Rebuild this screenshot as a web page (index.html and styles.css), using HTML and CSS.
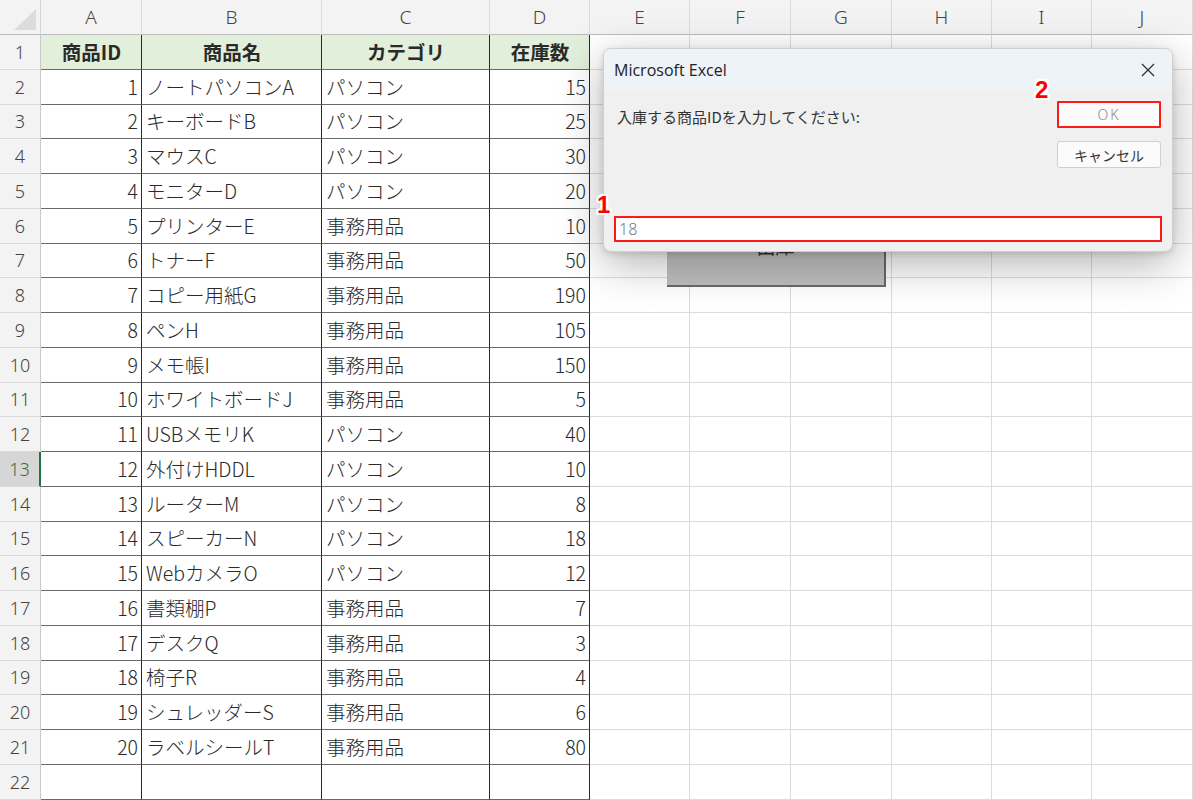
FILE: index.html
```html
<!DOCTYPE html>
<html lang="ja">
<head>
<meta charset="utf-8">
<title>Excel</title>
<link rel="stylesheet" href="styles.css">
</head>
<body>
<div class="sheet">
  <div class="corner"><svg width="41" height="35" viewBox="0 0 41 35"><polygon points="36,9 36,30 14,30" fill="#dcdcdc"/></svg></div>
  <div class="ch">A</div><div class="ch">B</div><div class="ch">C</div><div class="ch">D</div><div class="ch">E</div><div class="ch">F</div><div class="ch">G</div><div class="ch">H</div><div class="ch">I</div><div class="ch">J</div>

  <div class="rh">1</div><div class="c t hd">商品ID</div><div class="c t hd">商品名</div><div class="c t hd">カテゴリ</div><div class="c t hd">在庫数</div><div class="c"></div><div class="c"></div><div class="c"></div><div class="c"></div><div class="c"></div><div class="c"></div>
  <div class="rh">2</div><div class="c t n">1</div><div class="c t">ノートパソコンA</div><div class="c t">パソコン</div><div class="c t n">15</div><div class="c"></div><div class="c"></div><div class="c"></div><div class="c"></div><div class="c"></div><div class="c"></div>
  <div class="rh">3</div><div class="c t n">2</div><div class="c t">キーボードB</div><div class="c t">パソコン</div><div class="c t n">25</div><div class="c"></div><div class="c"></div><div class="c"></div><div class="c"></div><div class="c"></div><div class="c"></div>
  <div class="rh">4</div><div class="c t n">3</div><div class="c t">マウスC</div><div class="c t">パソコン</div><div class="c t n">30</div><div class="c"></div><div class="c"></div><div class="c"></div><div class="c"></div><div class="c"></div><div class="c"></div>
  <div class="rh">5</div><div class="c t n">4</div><div class="c t">モニターD</div><div class="c t">パソコン</div><div class="c t n">20</div><div class="c"></div><div class="c"></div><div class="c"></div><div class="c"></div><div class="c"></div><div class="c"></div>
  <div class="rh">6</div><div class="c t n">5</div><div class="c t">プリンターE</div><div class="c t">事務用品</div><div class="c t n">10</div><div class="c"></div><div class="c"></div><div class="c"></div><div class="c"></div><div class="c"></div><div class="c"></div>
  <div class="rh">7</div><div class="c t n">6</div><div class="c t">トナーF</div><div class="c t">事務用品</div><div class="c t n">50</div><div class="c"></div><div class="c"></div><div class="c"></div><div class="c"></div><div class="c"></div><div class="c"></div>
  <div class="rh">8</div><div class="c t n">7</div><div class="c t">コピー用紙G</div><div class="c t">事務用品</div><div class="c t n">190</div><div class="c"></div><div class="c"></div><div class="c"></div><div class="c"></div><div class="c"></div><div class="c"></div>
  <div class="rh">9</div><div class="c t n">8</div><div class="c t">ペンH</div><div class="c t">事務用品</div><div class="c t n">105</div><div class="c"></div><div class="c"></div><div class="c"></div><div class="c"></div><div class="c"></div><div class="c"></div>
  <div class="rh">10</div><div class="c t n">9</div><div class="c t">メモ帳I</div><div class="c t">事務用品</div><div class="c t n">150</div><div class="c"></div><div class="c"></div><div class="c"></div><div class="c"></div><div class="c"></div><div class="c"></div>
  <div class="rh">11</div><div class="c t n">10</div><div class="c t">ホワイトボードJ</div><div class="c t">事務用品</div><div class="c t n">5</div><div class="c"></div><div class="c"></div><div class="c"></div><div class="c"></div><div class="c"></div><div class="c"></div>
  <div class="rh">12</div><div class="c t n">11</div><div class="c t">USBメモリK</div><div class="c t">パソコン</div><div class="c t n">40</div><div class="c"></div><div class="c"></div><div class="c"></div><div class="c"></div><div class="c"></div><div class="c"></div>
  <div class="rh sel">13</div><div class="c t n">12</div><div class="c t">外付けHDDL</div><div class="c t">パソコン</div><div class="c t n">10</div><div class="c"></div><div class="c"></div><div class="c"></div><div class="c"></div><div class="c"></div><div class="c"></div>
  <div class="rh">14</div><div class="c t n">13</div><div class="c t">ルーターM</div><div class="c t">パソコン</div><div class="c t n">8</div><div class="c"></div><div class="c"></div><div class="c"></div><div class="c"></div><div class="c"></div><div class="c"></div>
  <div class="rh">15</div><div class="c t n">14</div><div class="c t">スピーカーN</div><div class="c t">パソコン</div><div class="c t n">18</div><div class="c"></div><div class="c"></div><div class="c"></div><div class="c"></div><div class="c"></div><div class="c"></div>
  <div class="rh">16</div><div class="c t n">15</div><div class="c t">WebカメラO</div><div class="c t">パソコン</div><div class="c t n">12</div><div class="c"></div><div class="c"></div><div class="c"></div><div class="c"></div><div class="c"></div><div class="c"></div>
  <div class="rh">17</div><div class="c t n">16</div><div class="c t">書類棚P</div><div class="c t">事務用品</div><div class="c t n">7</div><div class="c"></div><div class="c"></div><div class="c"></div><div class="c"></div><div class="c"></div><div class="c"></div>
  <div class="rh">18</div><div class="c t n">17</div><div class="c t">デスクQ</div><div class="c t">事務用品</div><div class="c t n">3</div><div class="c"></div><div class="c"></div><div class="c"></div><div class="c"></div><div class="c"></div><div class="c"></div>
  <div class="rh">19</div><div class="c t n">18</div><div class="c t">椅子R</div><div class="c t">事務用品</div><div class="c t n">4</div><div class="c"></div><div class="c"></div><div class="c"></div><div class="c"></div><div class="c"></div><div class="c"></div>
  <div class="rh">20</div><div class="c t n">19</div><div class="c t">シュレッダーS</div><div class="c t">事務用品</div><div class="c t n">6</div><div class="c"></div><div class="c"></div><div class="c"></div><div class="c"></div><div class="c"></div><div class="c"></div>
  <div class="rh">21</div><div class="c t n">20</div><div class="c t">ラベルシールT</div><div class="c t">事務用品</div><div class="c t n">80</div><div class="c"></div><div class="c"></div><div class="c"></div><div class="c"></div><div class="c"></div><div class="c"></div>
  <div class="rh">22</div><div class="c t"></div><div class="c t"></div><div class="c t"></div><div class="c t"></div><div class="c"></div><div class="c"></div><div class="c"></div><div class="c"></div><div class="c"></div><div class="c"></div>

  <div class="macro-btn"><span>出庫</span></div>

  <div class="dialog">
    <div class="dtitle">
      <span>Microsoft Excel</span>
      <svg class="close" width="14" height="14" viewBox="0 0 14 14"><path d="M1 1 L13 13 M13 1 L1 13" stroke="#333" stroke-width="1.3" fill="none"/></svg>
    </div>
    <div class="dbody">
      <div class="drow">
        <div class="msg">入庫する商品IDを入力してください:</div>
        <div class="btns">
          <div class="btn ok">OK</div>
          <div class="btn">キャンセル</div>
        </div>
      </div>
      <div class="input">18</div>
    </div>
  </div>

  <div class="badge b1">1</div>
  <div class="badge b2">2</div>
</div>
</body>
</html>
```

FILE: styles.css
```css
* { box-sizing: border-box; }
html, body { margin: 0; padding: 0; background: #fff; }
body { width: 1193px; height: 800px; overflow: hidden; }

.sheet {
  position: relative;
  display: grid;
  grid-template-columns: 41px 101px 180px 168px 100px 100px 101px 101px 100px 100px 101px;
  grid-template-rows: 35px;
  grid-auto-rows: 34.75px;
  font-family: "Noto Sans CJK JP", sans-serif;
  color: #2a2a2a;
}

.corner {
  background: #f3f3f3;
  border-right: 1px solid #d4d4d4;
  border-bottom: 1px solid #bcbcbc;
}
.corner svg { display: block; }

.ch {
  background: #f3f3f3;
  border-right: 1px solid #dadada;
  border-bottom: 1px solid #bcbcbc;
  display: flex;
  align-items: center;
  justify-content: center;
  font-family: "Noto Sans", sans-serif;
  font-size: 19px;
  font-weight: 300;
  color: #444;
}

.rh {
  background: #f3f3f3;
  border-right: 1px solid #c8c8c8;
  border-bottom: 1px solid #dadada;
  display: flex;
  align-items: center;
  justify-content: center;
  font-family: "Noto Sans", sans-serif;
  font-size: 18px;
  font-weight: 300;
  color: #444;
}
.rh.sel {
  background: #d6d6d6;
  border-right: 2px solid #217346;
  color: #3c6b4e;
}

.c {
  border-right: 1px solid #dcdcdc;
  border-bottom: 1px solid #dcdcdc;
  display: flex;
  align-items: center;
  padding: 0 3px 1px 4px;
  font-size: 19.5px;
  font-weight: 300;
  white-space: nowrap;
  overflow: hidden;
}
.c.t {
  border-right: 1px solid #2a2a2a;
  border-bottom: 1px solid #6a6a6a;
}
.c.n { justify-content: flex-end; }
.c.hd {
  background: #e2efda;
  justify-content: center;
  font-weight: 700;
}

.macro-btn {
  position: absolute;
  left: 667px;
  top: 205px;
  width: 219px;
  height: 82px;
  background: linear-gradient(#d0d0d0, #bebebe);
  border-right: 2px solid #6a6a6a;
  border-bottom: 2px solid #6a6a6a;
  display: flex;
  align-items: center;
  justify-content: center;
  font-size: 19px;
  color: #333;
}

.dialog {
  position: absolute;
  left: 603px;
  top: 48px;
  width: 570px;
  height: 204px;
  border-radius: 8px;
  background: #f0f0f0;
  border: 1px solid #cfcfcf;
  box-shadow: 0 12px 44px rgba(0, 0, 0, 0.3), 0 2px 6px rgba(0, 0, 0, 0.12);
  overflow: hidden;
  display: flex;
  flex-direction: column;
  font-family: "Noto Sans CJK JP", sans-serif;
}
.dtitle {
  height: 42px;
  flex: none;
  background: #eef3f8;
  display: flex;
  align-items: center;
  justify-content: space-between;
  padding: 0 17px 0 10px;
  font-family: "Open Sans", "Noto Sans", sans-serif;
  font-size: 16px;
  color: #222;
}
.close { display: block; }

.dbody {
  flex: 1;
  display: flex;
  flex-direction: column;
  padding: 10px 10px 9px 10px;
}
.drow {
  flex: 1;
  display: flex;
  justify-content: space-between;
}
.msg {
  margin-top: 5px;
  padding-left: 3px;
  font-size: 15px;
  color: #333;
  line-height: 22px;
}
.btns {
  display: flex;
  flex-direction: column;
  gap: 13px;
  margin-right: 1px;
}
.btn {
  width: 104px;
  height: 27px;
  background: #fbfbfb;
  border: 1px solid #cfcfcf;
  border-radius: 3px;
  display: flex;
  align-items: center;
  justify-content: center;
  font-size: 14px;
  color: #333;
}
.btn.ok {
  border: 2px solid #ff1a1a;
  border-radius: 1px;
  color: #8a8a8a;
  letter-spacing: 2px;
  font-family: "Noto Sans", sans-serif;
  font-weight: 300;
}
.input {
  height: 26px;
  background: #fff;
  border: 2px solid #ff1a1a;
  display: flex;
  align-items: center;
  padding-left: 3px;
  font-family: "Noto Sans", sans-serif;
  font-size: 16px;
  font-weight: 300;
  color: #777;
}

.badge {
  position: absolute;
  font-family: "Liberation Sans", Arial, sans-serif;
  font-weight: 700;
  font-size: 24px;
  line-height: 24px;
  color: #ff0000;
  text-shadow:
    2px 0 0 #fff, -2px 0 0 #fff, 0 2px 0 #fff, 0 -2px 0 #fff,
    2px 2px 0 #fff, -2px -2px 0 #fff, 2px -2px 0 #fff, -2px 2px 0 #fff;
}
.b1 { left: 597px; top: 193px; }
.b2 { left: 1035px; top: 78px; }
```
